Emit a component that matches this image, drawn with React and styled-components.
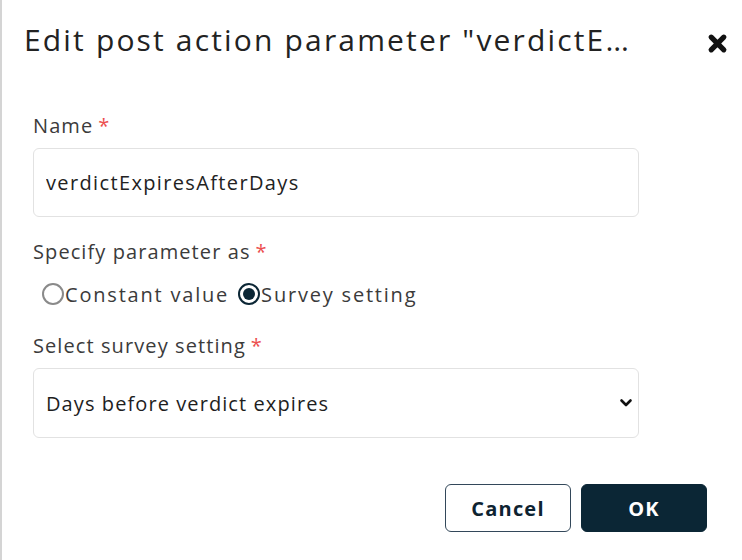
import React, { useState } from "react";
import styled, { createGlobalStyle } from "styled-components";

const GlobalStyle = createGlobalStyle`
  html, body {
    margin: 0;
    padding: 0;
    background: #ffffff;
  }
  body {
    font-family: "Open Sans", "Noto Sans", sans-serif;
    letter-spacing: 0.068em;
  }
`;

const Dialog = styled.div`
  box-sizing: border-box;
  min-height: 560px;
  border-left: 2px solid #d4d4d4;
  display: flex;
  flex-direction: column;
`;

const Header = styled.div`
  display: flex;
  align-items: center;
  justify-content: space-between;
  padding: 22px 14px 0 22px;
`;

const Title = styled.h1`
  margin: 0;
  font-size: 30px;
  font-weight: 400;
  line-height: 36px;
  letter-spacing: 0.072em;
  color: #222222;
  white-space: nowrap;
`;

const CloseButton = styled.button`
  border: none;
  background: none;
  padding: 0;
  margin-top: 6px;
  width: 22px;
  height: 22px;
  display: flex;
  align-items: center;
  justify-content: center;
  cursor: pointer;
`;

const Form = styled.form`
  width: 606px;
  padding: 56px 0 0 31px;
  display: flex;
  flex-direction: column;
`;

const Field = styled.div`
  display: flex;
  flex-direction: column;
  margin-bottom: ${(p) => p.$gap || 0}px;
`;

const Label = styled.label`
  font-size: 20px;
  line-height: 24px;
  color: #3b3b3b;
  margin-bottom: ${(p) => p.$space || 0}px;
`;

const Required = styled.span`
  color: #ec4f4f;
  margin-left: 5px;
`;

const TextInput = styled.input`
  box-sizing: border-box;
  height: 69px;
  border: 1px solid #e2e2e2;
  border-radius: 6px;
  padding: 0 12px;
  font-family: "Open Sans", "Noto Sans", sans-serif;
  font-size: 20px;
  letter-spacing: 0.068em;
  color: #222222;
  outline: none;
  caret-color: #222;
`;

const RadioRow = styled.div`
  display: flex;
  align-items: center;
  gap: 9px;
  padding-left: 9px;
  height: 28px;
`;

const RadioOption = styled.label`
  display: flex;
  align-items: center;
  font-size: 20px;
  letter-spacing: 0.09em;
  color: #3b3b3b;
  cursor: pointer;
`;

const RadioCircle = styled.span`
  box-sizing: border-box;
  width: 22px;
  height: 22px;
  border-radius: 50%;
  border: 2px solid ${(p) => (p.$checked ? "#0b2635" : "#8a8a8a")};
  display: flex;
  align-items: center;
  justify-content: center;
  margin-right: 1px;

  &::after {
    content: "";
    width: 12px;
    height: 12px;
    border-radius: 50%;
    background: ${(p) => (p.$checked ? "#0b2635" : "transparent")};
  }
`;

const SelectBox = styled.div`
  box-sizing: border-box;
  height: 70px;
  border: 1px solid #e2e2e2;
  border-radius: 6px;
  padding: 0 5px 0 12px;
  display: flex;
  align-items: center;
  justify-content: space-between;
  font-size: 20px;
  font-weight: 500;
  color: #1e1e1e;
`;

const Footer = styled.div`
  display: flex;
  justify-content: flex-end;
  gap: 10px;
  padding: 46px 35px 0 0;
`;

const Button = styled.button`
  box-sizing: border-box;
  width: 126px;
  height: 48px;
  border-radius: 6px;
  font-family: "Open Sans", "Noto Sans", sans-serif;
  font-size: 20px;
  font-weight: 700;
  letter-spacing: 0.06em;
  cursor: pointer;
  border: 1.5px solid ${(p) => (p.$primary ? "#0b2635" : "#33485a")};
  background: ${(p) => (p.$primary ? "#0b2635" : "#ffffff")};
  color: ${(p) => (p.$primary ? "#ffffff" : "#0e2331")};
`;

const CloseIcon = () => (
  <svg width="21" height="21" viewBox="0 0 20 20">
    <path
      d="M4 4 L16 16 M16 4 L4 16"
      stroke="#111"
      strokeWidth="5"
      strokeLinecap="round"
    />
  </svg>
);

const Chevron = () => (
  <svg width="14" height="10" viewBox="0 0 14 10">
    <path
      d="M2.5 2.5 L7 7 L11.5 2.5"
      fill="none"
      stroke="#111"
      strokeWidth="2.6"
      strokeLinecap="round"
      strokeLinejoin="round"
    />
  </svg>
);

export default function App() {
  const [name, setName] = useState("verdictExpiresAfterDays");
  const [mode, setMode] = useState("survey");

  return (
    <>
      <GlobalStyle />
      <Dialog>
        <Header>
          <Title>Edit post action parameter "verdictE…</Title>
          <CloseButton aria-label="Close">
            <CloseIcon />
          </CloseButton>
        </Header>
        <Form onSubmit={(e) => e.preventDefault()}>
          <Field $gap={23}>
            <Label $space={10}>
              Name<Required>*</Required>
            </Label>
            <TextInput value={name} onChange={(e) => setName(e.target.value)} />
          </Field>
          <Field $gap={26}>
            <Label $space={16}>
              Specify parameter as<Required>*</Required>
            </Label>
            <RadioRow>
              <RadioOption onClick={() => setMode("constant")}>
                <RadioCircle $checked={mode === "constant"} />
                Constant value
              </RadioOption>
              <RadioOption onClick={() => setMode("survey")}>
                <RadioCircle $checked={mode === "survey"} />
                Survey setting
              </RadioOption>
            </RadioRow>
          </Field>
          <Field>
            <Label $space={10}>
              Select survey setting<Required>*</Required>
            </Label>
            <SelectBox>
              Days before verdict expires
              <Chevron />
            </SelectBox>
          </Field>
        </Form>
        <Footer>
          <Button type="button">Cancel</Button>
          <Button type="button" $primary>
            OK
          </Button>
        </Footer>
      </Dialog>
    </>
  );
}
